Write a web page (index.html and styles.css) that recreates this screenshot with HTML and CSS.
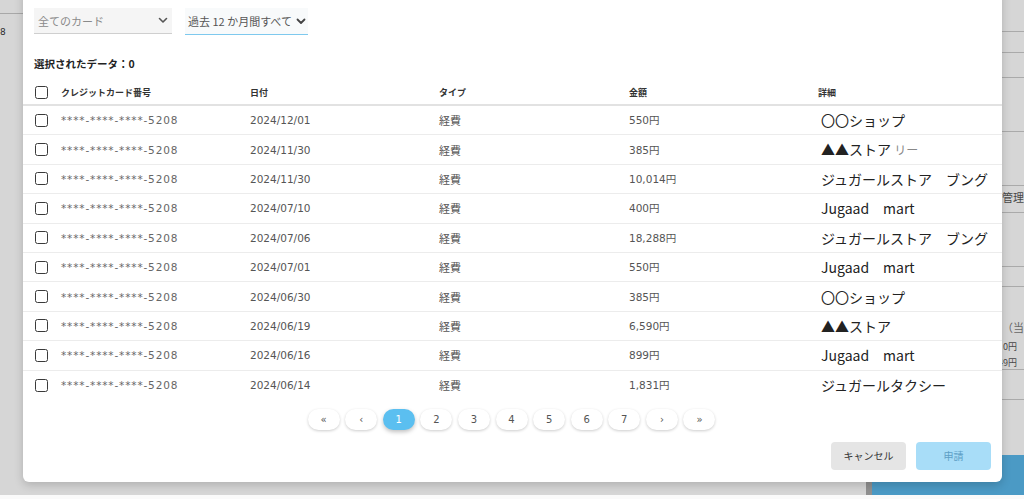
FILE: index.html
```html
<!DOCTYPE html>
<html lang="ja">
<head>
<meta charset="utf-8">
<link rel="stylesheet" href="styles.css">
</head>
<body>
<div class="page">
  <div class="bg-left">
    <div class="bg-left-row"></div>
    <div class="bg-left-num">8</div>
  </div>
  <div class="bg-right">
    <div class="bg-r h32"></div>
    <div class="bg-r h21"></div>
    <div class="bg-r h25"></div>
    <div class="bg-r h54"></div>
    <div class="bg-r h54"></div>
    <div class="bg-r h27 bg-text">管理</div>
    <div class="bg-r h54"></div>
    <div class="bg-r h20"></div>
    <div class="bg-r h83 bg-stack"><span>（当</span><span>0円</span><span>49円</span></div>
    <div class="bg-r h30"></div>
  </div>
  <div class="bg-bottom">
    <div class="bg-bottom-grey"></div>
    <div class="bg-bottom-sep"></div>
    <div class="bg-bottom-blue"></div>
  </div>
</div>
<div class="overlay"></div>

<div class="modal">
  <div class="filters">
    <div class="select select-card">
      <span>全てのカード</span>
      <svg class="chev" width="10" height="7" viewBox="0 0 10 7"><path d="M1.5 1.5 L5 5 L8.5 1.5" fill="none" stroke="#555" stroke-width="1.6" stroke-linecap="round" stroke-linejoin="round"/></svg>
    </div>
    <div class="select select-period">
      <span>過去 12 か月間すべて</span>
      <svg class="chev" width="10" height="7" viewBox="0 0 10 7"><path d="M1.5 1.5 L5 5 L8.5 1.5" fill="none" stroke="#444" stroke-width="1.8" stroke-linecap="round" stroke-linejoin="round"/></svg>
    </div>
  </div>
  <div class="selected">選択されたデータ：0</div>

  <div class="table">
    <div class="row head">
      <div class="cell cb"><span class="box"></span></div>
      <div class="cell">クレジットカード番号</div>
      <div class="cell">日付</div>
      <div class="cell">タイプ</div>
      <div class="cell">金額</div>
      <div class="cell">詳細</div>
    </div>
    <div class="row"><div class="cell cb"><span class="box"></span></div><div class="cell card">****-****-****-5208</div><div class="cell date">2024/12/01</div><div class="cell type">経費</div><div class="cell amt">550円</div><div class="cell det">〇〇ショップ</div></div>
    <div class="row"><div class="cell cb"><span class="box"></span></div><div class="cell card">****-****-****-5208</div><div class="cell date">2024/11/30</div><div class="cell type">経費</div><div class="cell amt">385円</div><div class="cell det">▲▲ストア <span class="faint">リー</span></div></div>
    <div class="row"><div class="cell cb"><span class="box"></span></div><div class="cell card">****-****-****-5208</div><div class="cell date">2024/11/30</div><div class="cell type">経費</div><div class="cell amt">10,014円</div><div class="cell det">ジュガールストア　ブング</div></div>
    <div class="row"><div class="cell cb"><span class="box"></span></div><div class="cell card">****-****-****-5208</div><div class="cell date">2024/07/10</div><div class="cell type">経費</div><div class="cell amt">400円</div><div class="cell det">Jugaad　mart</div></div>
    <div class="row"><div class="cell cb"><span class="box"></span></div><div class="cell card">****-****-****-5208</div><div class="cell date">2024/07/06</div><div class="cell type">経費</div><div class="cell amt">18,288円</div><div class="cell det">ジュガールストア　ブング</div></div>
    <div class="row"><div class="cell cb"><span class="box"></span></div><div class="cell card">****-****-****-5208</div><div class="cell date">2024/07/01</div><div class="cell type">経費</div><div class="cell amt">550円</div><div class="cell det">Jugaad　mart</div></div>
    <div class="row"><div class="cell cb"><span class="box"></span></div><div class="cell card">****-****-****-5208</div><div class="cell date">2024/06/30</div><div class="cell type">経費</div><div class="cell amt">385円</div><div class="cell det">〇〇ショップ</div></div>
    <div class="row"><div class="cell cb"><span class="box"></span></div><div class="cell card">****-****-****-5208</div><div class="cell date">2024/06/19</div><div class="cell type">経費</div><div class="cell amt">6,590円</div><div class="cell det">▲▲ストア</div></div>
    <div class="row"><div class="cell cb"><span class="box"></span></div><div class="cell card">****-****-****-5208</div><div class="cell date">2024/06/16</div><div class="cell type">経費</div><div class="cell amt">899円</div><div class="cell det">Jugaad　mart</div></div>
    <div class="row last"><div class="cell cb"><span class="box"></span></div><div class="cell card">****-****-****-5208</div><div class="cell date">2024/06/14</div><div class="cell type">経費</div><div class="cell amt">1,831円</div><div class="cell det">ジュガールタクシー</div></div>
  </div>

  <div class="pager">
    <button class="pg">«</button>
    <button class="pg">‹</button>
    <button class="pg active">1</button>
    <button class="pg">2</button>
    <button class="pg">3</button>
    <button class="pg">4</button>
    <button class="pg">5</button>
    <button class="pg">6</button>
    <button class="pg">7</button>
    <button class="pg">›</button>
    <button class="pg">»</button>
  </div>

  <div class="actions">
    <button class="btn cancel">キャンセル</button>
    <button class="btn apply">申請</button>
  </div>
</div>
</body>
</html>
```

FILE: styles.css
```css
* { box-sizing: border-box; }
html, body { margin: 0; padding: 0; }
body {
  width: 1024px;
  height: 499px;
  overflow: hidden;
  position: relative;
  background: #f4f4f4;
  font-family: "Noto Sans CJK JP", "Noto Sans", sans-serif;
}
.page {
  position: absolute;
  inset: 0;
  background: #fafafa;
}
.bg-left {
  position: absolute;
  left: 0; top: 0;
  width: 30px;
}
.bg-left-row { height: 14px; border-bottom: 1px solid #c4c4c4; }
.bg-left-num { font-family: "DejaVu Sans", sans-serif; font-size: 9px; color: #333; padding-top: 12px; line-height: 12px; }
.bg-right {
  position: absolute;
  right: 0; top: 0;
  width: 40px;
  display: flex;
  flex-direction: column;
}
.bg-r { border-bottom: 1px solid #c6c6c6; font-size: 11px; color: #555; white-space: nowrap; overflow: hidden; flex-shrink: 0; }
.h20 { height: 20px; } .h21 { height: 21px; } .h25 { height: 25px; } .h27 { height: 27px; }
.h30 { height: 30px; } .h32 { height: 32px; } .h54 { height: 54px; } .h83 { height: 83px; }
.bg-text { padding-top: 4px; padding-left: 18px; line-height: 14px; }
.bg-stack { display: flex; flex-direction: column; align-items: flex-end; padding-right: 7px; padding-top: 31px; font-size: 9px; line-height: 16px; }
.bg-stack span:first-child { font-size: 11px; line-height: 18px; color: #777; margin-right: -7px; }
.bg-stack span:nth-child(2) { margin-top: 3px; }
.bg-bottom {
  position: absolute;
  left: 0; right: 0; top: 455px;
  height: 40px;
  display: flex;
}
.bg-bottom-grey { flex: 0 0 866px; }
.bg-bottom-sep { flex: 0 0 6px; background: #a8a8a8; }
.bg-bottom-blue { flex: 1; background: #58b4e6; }

.overlay {
  position: absolute;
  left: 0; right: 0; top: 0;
  height: 495px;
  background: rgba(0,0,0,0.14);
}

.modal {
  position: absolute;
  left: 23px;
  top: -12px;
  width: 979px;
  height: 494px;
  background: #fff;
  border-radius: 6px;
  box-shadow: 0 3px 10px rgba(0,0,0,0.18);
  padding-top: 20px;
  display: flex;
  flex-direction: column;
}

.filters { display: flex; gap: 13px; padding-left: 11px; }
.select {
  height: 26px;
  display: flex;
  align-items: center;
  justify-content: space-between;
  background: #f5f5f5;
  font-size: 11px;
  padding: 0 6px 0 4px;
}
.select-card { width: 138px; color: #8a8a8a; border-bottom: 1px solid #cfcfcf; padding-right: 4px; }
.select-period { width: 123px; color: #555; background: #f8fafb; border-bottom: 1.5px solid #7ec9ee; height: 27px; padding-left: 3px; padding-right: 2px; }

.selected {
  margin-top: 22px;
  padding-left: 11px;
  font-size: 10.5px;
  font-weight: bold;
  color: #222;
  line-height: 14px;
}

.table { margin-top: 10px; display: flex; flex-direction: column; }
.row {
  display: grid;
  grid-template-columns: 38px 189px 189px 190px 189px 1fr;
  height: 29.4px;
  align-items: center;
  border-bottom: 1px solid #ececec;
}
.row.head { height: 25px; border-bottom: 2px solid #e2e2e2; }
.row.last { border-bottom: none; }
.cell { font-family: "DejaVu Sans", "Noto Sans CJK JP", sans-serif; font-size: 10.5px; color: #555; white-space: nowrap; line-height: 14px; }
.head .cell { font-family: "Noto Sans CJK JP", sans-serif; font-size: 9px; font-weight: bold; color: #333; }
.cb { padding-left: 12px; display: flex; align-items: center; }
.box {
  width: 13px; height: 13px;
  border: 1.8px solid #3a3a3a;
  border-radius: 2.5px;
  display: block;
}
.card { color: #666; letter-spacing: 0.85px; }
.date { color: #555; }
.type { color: #555; font-family: "Noto Sans CJK JP", sans-serif; font-size: 11px; }
.amt { color: #555; }
.det { font-family: "Noto Sans CJK JP", sans-serif; font-size: 14px; color: #222; padding-left: 3px; line-height: 18px; }
.faint { color: #888; font-size: 12px; }

.pager {
  margin-top: 9px;
  display: flex;
  justify-content: center;
  gap: 5.6px;
  padding-right: 2px;
}
.pg {
  width: 32px;
  height: 21px;
  border: none;
  border-radius: 11px;
  background: #fff;
  box-shadow: 0 1px 3px rgba(0,0,0,0.2);
  font-family: "DejaVu Sans", sans-serif;
  font-size: 10px;
  color: #555;
  padding: 0;
}
.pg.active { background: #5bbff0; color: #fff; box-shadow: 0 2px 4px rgba(0,0,0,0.25); }

.actions {
  margin-top: 12px;
  display: flex;
  justify-content: flex-end;
  gap: 10px;
  padding-right: 11px;
}
.btn {
  width: 75px;
  height: 28px;
  border: none;
  border-radius: 4px;
  font-family: "Noto Sans CJK JP", sans-serif;
  font-size: 10px;
}
.cancel { background: #e5e5e5; color: #333; }
.apply { background: #a8ddf8; color: #5d9fc6; }
```
